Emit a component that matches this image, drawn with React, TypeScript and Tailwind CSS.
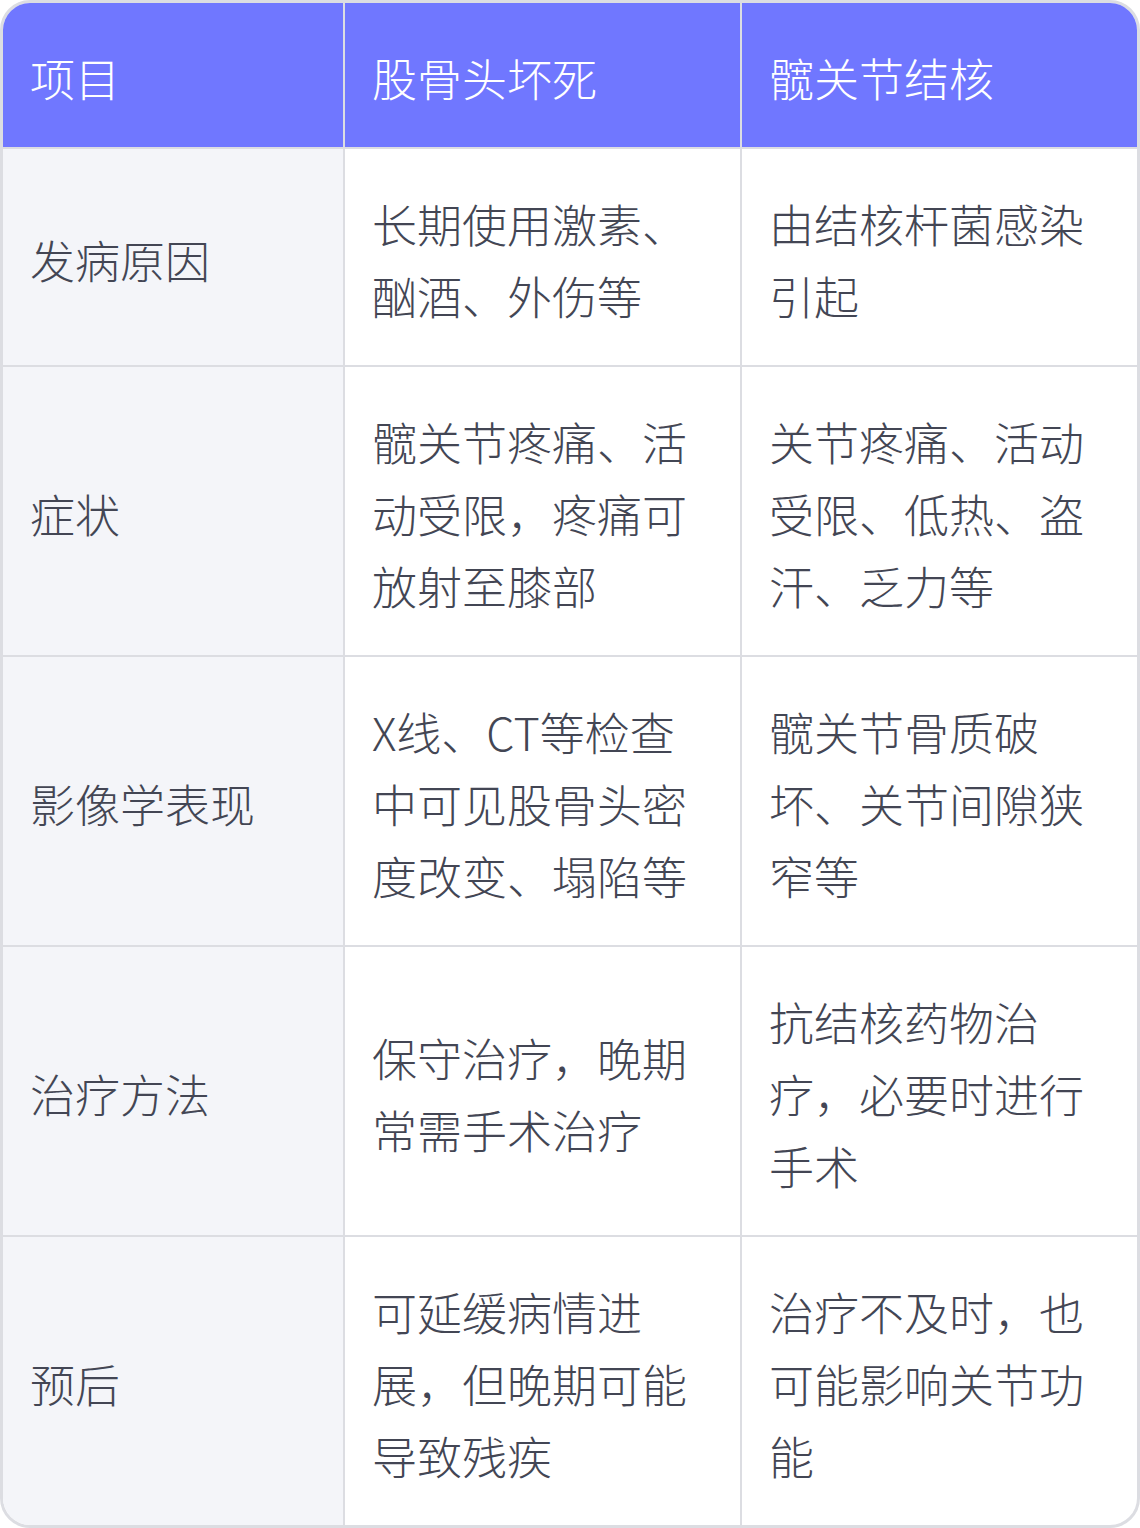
import React from "react";

const rows: [string, string, string][] = [
  ["发病原因", "长期使用激素、酗酒、外伤等", "由结核杆菌感染引起"],
  ["症状", "髋关节疼痛、活动受限，疼痛可放射至膝部", "关节疼痛、活动受限、低热、盗汗、乏力等"],
  ["影像学表现", "X线、CT等检查中可见股骨头密度改变、塌陷等", "髋关节骨质破坏、关节间隙狭窄等"],
  ["治疗方法", "保守治疗，晚期常需手术治疗", "抗结核药物治疗，必要时进行手术"],
  ["预后", "可延缓病情进展，但晚期可能导致残疾", "治疗不及时，也可能影响关节功能"],
];

export default function App() {
  return (
    <div
      className="w-[1140px] h-[1528px] bg-white text-[45px] leading-[72px] font-light text-[#434654]"
      style={{ fontFamily: '"Noto Sans CJK SC", "Noto Sans", sans-serif' }}
    >
      <div className="w-[1140px] h-[1528px] border-[3px] border-[#dcdde2] rounded-[30px] overflow-hidden flex flex-col">
        <div className="grid grid-cols-[342px_397px_1fr] bg-[#7077ff] text-white border-b-2 border-[#dcdde2]">
          <div className="pl-[27px] pr-[40px] pt-[39px] pb-[33px] border-r-2 border-[#dcdde2]">项目</div>
          <div className="pl-[27px] pr-[40px] pt-[39px] pb-[33px] border-r-2 border-[#dcdde2]">股骨头坏死</div>
          <div className="pl-[27px] pr-[40px] pt-[39px] pb-[33px]">髋关节结核</div>
        </div>
        {rows.map((r, i) => (
          <div
            key={i}
            className={`grid grid-cols-[342px_397px_1fr] flex-1 ${i < rows.length - 1 ? "border-b-2 border-[#dcdde2]" : ""}`}
          >
            <div className="bg-[#f4f5f9] pl-[27px] pr-[40px] pt-[39px] pb-[33px] border-r-2 border-[#dcdde2] flex items-center">
              <span>{r[0]}</span>
            </div>
            <div className="pl-[27px] pr-[40px] pt-[39px] pb-[33px] border-r-2 border-[#dcdde2] flex items-center">
              <span>{r[1]}</span>
            </div>
            <div className="pl-[27px] pr-[40px] pt-[39px] pb-[33px] flex items-center">
              <span>{r[2]}</span>
            </div>
          </div>
        ))}
      </div>
    </div>
  );
}
